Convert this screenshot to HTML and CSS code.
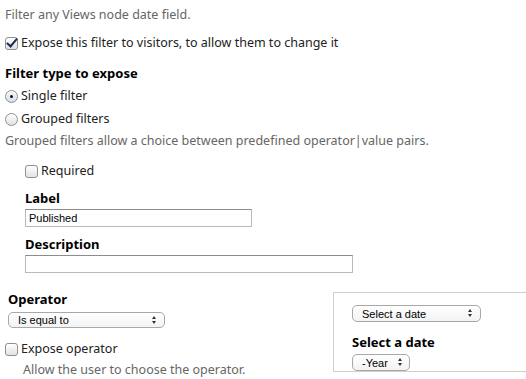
FILE: index.html
```html
<!DOCTYPE html>
<html lang="en">
<head>
    <meta charset="UTF-8">
    <meta name="viewport" content="width=device-width, initial-scale=1.0">
    <title>Date filter settings</title>
    <link rel="stylesheet" href="styles.css">
</head>
<body>
    <div class="page">
        <p class="hint first">Filter any Views node date field.</p>

        <label class="check expose"><input type="checkbox" checked> Expose this filter to visitors, to allow them to change it</label>

        <h3 class="heading">Filter type to expose</h3>
        <label class="check single"><input type="radio" name="filter-type" checked> Single filter</label>
        <label class="check grouped"><input type="radio" name="filter-type"> Grouped filters</label>
        <p class="hint grouped-hint">Grouped filters allow a choice between predefined operator|value pairs.</p>

        <div class="indent">
            <label class="check required"><input type="checkbox"> Required</label>

            <label class="field-label" for="filter-label">Label</label>
            <input type="text" id="filter-label" class="text label-input" value="Published">

            <label class="field-label desc-label" for="filter-desc">Description</label>
            <input type="text" id="filter-desc" class="text desc-input">
        </div>

        <div class="bottom">
            <div class="operator">
                <label class="field-label op-label" for="operator">Operator</label>
                <span class="select op-select">
                    <select id="operator">
                        <option>Is equal to</option>
                        <option>Is less than</option>
                        <option>Is greater than</option>
                    </select>
                </span>
                <label class="check expose-op"><input type="checkbox"> Expose operator</label>
                <p class="hint op-hint">Allow the user to choose the operator.</p>
            </div>

            <div class="value-box">
                <span class="select date-select">
                    <select>
                        <option>Select a date</option>
                        <option>Enter a relative date</option>
                    </select>
                </span>
                <label class="field-label date-label">Select a date</label>
                <span class="select year-select">
                    <select>
                        <option>-Year</option>
                    </select>
                </span>
            </div>
        </div>
    </div>
</body>
</html>
```

FILE: styles.css
```css
html, body {
    margin: 0;
    padding: 0;
    background-color: #fff;
    overflow: hidden;
}
body {
    font-family: 'Noto Sans', 'Lucida Grande', sans-serif;
    font-size: 12.5px;
    line-height: 16px;
    color: #222;
}
.page {
    padding: 7px 0 0 5px;
}
p {
    margin: 0;
}
.hint {
    color: #666;
}
.heading {
    margin: 14px 0 0;
    font-size: 13px;
    font-weight: bold;
    color: #000;
}
.check {
    display: flex;
    align-items: center;
    gap: 3px;
}
.check input {
    -webkit-appearance: none;
    appearance: none;
    position: relative;
    flex: none;
    width: 13px;
    height: 13px;
    margin: 0;
    border: 1px solid #8f8f8f;
    border-radius: 3px;
    background: linear-gradient(#fff, #e2e2e2);
    box-shadow: inset 0 1px 1px rgba(255,255,255,0.9);
}
.check input[type="radio"] {
    border-radius: 50%;
}
.check input[type="checkbox"]:checked::after {
    content: '';
    position: absolute;
    left: 3px;
    top: -2px;
    width: 4px;
    height: 9px;
    border: solid #1d2c57;
    border-width: 0 2px 2px 0;
    transform: rotate(40deg);
}
.check input[type="radio"]:checked {
    background: linear-gradient(#f4f8fc, #d4dde8);
}
.check input[type="radio"]:checked::after {
    content: '';
    position: absolute;
    left: 4px;
    top: 4px;
    width: 3px;
    height: 3px;
    border-radius: 50%;
    background-color: #111;
}
.expose {
    margin-top: 12px;
}
.single {
    margin-top: 7px;
}
.grouped {
    margin-top: 7px;
}
.grouped-hint {
    margin-top: 6px;
}
.indent {
    padding-left: 20px;
}
.required {
    margin-top: 14px;
}
.field-label {
    display: block;
    font-size: 13px;
    font-weight: bold;
    color: #000;
    margin-top: 11px;
}
.desc-label {
    margin-top: 9px;
}
.text {
    display: block;
    box-sizing: border-box;
    height: 18px;
    margin: 3px 0 0;
    padding: 0 3px;
    border: 1px solid #b9b9b9;
    border-top-color: #8c8c8c;
    font-family: 'Liberation Sans', Arial, sans-serif;
    font-size: 11px;
    color: #000;
    outline: none;
}
.label-input {
    width: 227px;
}
.desc-input {
    width: 328px;
}
.bottom {
    display: flex;
    justify-content: space-between;
    align-items: flex-start;
    margin-top: 18px;
}
.operator {
    width: 300px;
}
.op-label {
    margin: 0 0 0 3px;
}
.select {
    position: relative;
    display: block;
}
.select select {
    -webkit-appearance: none;
    appearance: none;
    display: block;
    box-sizing: border-box;
    height: 16px;
    padding: 0 0 0 9px;
    border: 1px solid #a8a8a8;
    border-radius: 5px;
    background: linear-gradient(#fff, #f3f3f3);
    font-family: 'Liberation Sans', Arial, sans-serif;
    font-size: 11px;
    line-height: 14px;
    color: #000;
    outline: none;
}
.select::before,
.select::after {
    content: '';
    position: absolute;
    width: 0;
    height: 0;
    border-left: 2.5px solid transparent;
    border-right: 2.5px solid transparent;
    pointer-events: none;
}
.select::before {
    top: 4px;
    border-bottom: 3px solid #333;
}
.select::after {
    top: 9px;
    border-top: 3px solid #333;
}
.op-select {
    margin: 5px 0 0 3px;
    width: 157px;
}
.op-select select {
    width: 157px;
}
.op-select::before,
.op-select::after {
    left: 144px;
}
.expose-op {
    margin-top: 13px;
}
.op-hint {
    margin: 5px 0 0 18px;
}
.value-box {
    width: 174px;
    height: 66px;
    margin-top: 1px;
    padding: 12px 0 0 18px;
    border: 1px solid #cfcfcf;
    border-right: none;
    overflow: hidden;
}
.date-select select {
    width: 129px;
    height: 17px;
}
.date-select::before,
.date-select::after {
    left: 116px;
}
.date-label {
    margin-top: 12px;
}
.year-select {
    margin-top: 4px;
}
.year-select select {
    width: 58px;
    height: 17px;
}
.year-select::before,
.year-select::after {
    left: 46px;
}
```
